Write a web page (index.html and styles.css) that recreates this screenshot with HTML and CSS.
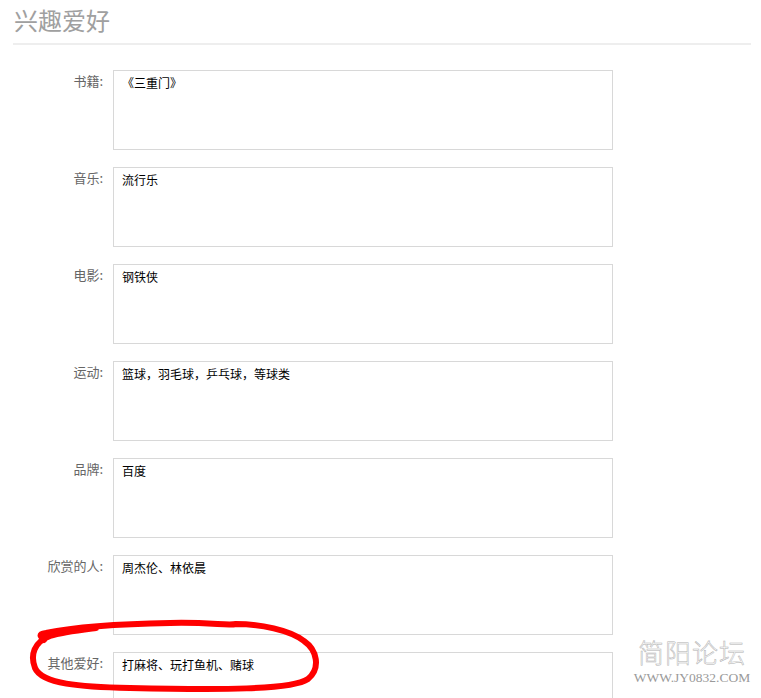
FILE: index.html
```html
<!DOCTYPE html>
<html lang="zh-CN">
<head>
<meta charset="utf-8">
<title>兴趣爱好</title>
<link rel="stylesheet" href="styles.css">
</head>
<body>
<div class="page">
  <div class="head"><h2 class="title">兴趣爱好</h2></div>
  <div class="form">
    <div class="row"><label class="lbl">书籍:</label><textarea class="box" readonly>《三重门》</textarea></div>
    <div class="row"><label class="lbl">音乐:</label><textarea class="box" readonly>流行乐</textarea></div>
    <div class="row"><label class="lbl">电影:</label><textarea class="box" readonly>钢铁侠</textarea></div>
    <div class="row"><label class="lbl">运动:</label><textarea class="box" readonly>篮球，羽毛球，乒乓球，等球类</textarea></div>
    <div class="row"><label class="lbl">品牌:</label><textarea class="box" readonly>百度</textarea></div>
    <div class="row"><label class="lbl">欣赏的人:</label><textarea class="box" readonly>周杰伦、林依晨</textarea></div>
    <div class="row"><label class="lbl">其他爱好:</label><textarea class="box" readonly>打麻将、玩打鱼机、赌球</textarea></div>
  </div>
  <svg class="circle" width="761" height="698" viewBox="0 0 761 698" aria-hidden="true">
    <path d="M44 640 C40 636 38 634 46 633 C70 628 110 624 170 623 C210 622 228 626 236 624 C260 624 290 630 304 641 C317 650 321 668 308 679 C292 690 220 690 130 688 C80 687 42 684 35 668 C30 655 34 642 50 636 C62 632 80 630 96 628" />
  </svg>
  <div class="watermark">
    <div class="wm-cn">简阳论坛</div>
    <div class="wm-en">WWW.JY0832.COM</div>
  </div>
</div>
</body>
</html>
```
FILE: styles.css
```css
html, body {
  margin: 0;
  padding: 0;
  background: #fff;
}
body {
  font-family: "Noto Sans CJK SC", "Noto Sans", sans-serif;
  font-size: 12px;
}
.page {
  position: relative;
  padding: 5px 10px 0 13px;
  width: 738px;
}
.head {
  border-bottom: 2px solid #eeeeee;
  padding-bottom: 8px;
}
.title {
  margin: 0 0 0 1px;
  font-size: 24px;
  line-height: 30px;
  font-weight: normal;
  color: #a0a0a0;
}
.form {
  padding-top: 25px;
}
.row {
  display: flex;
  align-items: flex-start;
  gap: 10px;
  margin-bottom: 17px;
}
.lbl {
  width: 90px;
  flex: none;
  text-align: right;
  color: #666;
  font-size: 13px;
  line-height: 18px;
  padding-top: 2px;
}
.box {
  box-sizing: border-box;
  width: 500px;
  height: 80px;
  margin: 0;
  border: 1px solid #d8d8d8;
  padding: 3px 8px;
  font-family: "Noto Sans CJK SC", "Noto Sans", sans-serif;
  font-size: 12px;
  line-height: 18px;
  color: #000;
  resize: none;
  outline: none;
  background: #fff;
  overflow: hidden;
}
.circle {
  position: absolute;
  left: 0;
  top: 0;
  pointer-events: none;
}
.circle path {
  fill: none;
  stroke: #ff0000;
  stroke-width: 6;
  stroke-linecap: round;
  stroke-linejoin: round;
}
.watermark {
  position: absolute;
  left: 631px;
  top: 636px;
  width: 122px;
  text-align: center;
  pointer-events: none;
}
.wm-cn {
  font-family: "Noto Sans CJK SC", serif;
  font-size: 26px;
  line-height: 32px;
  font-weight: 300;
  letter-spacing: 1px;
  color: #fff;
  -webkit-text-stroke: 0.5px #b0b0b0;
}
.wm-en {
  font-family: "Liberation Serif", serif;
  font-size: 13.5px;
  line-height: 16px;
  color: #9a9a9a;
  margin-top: 2px;
}
```
